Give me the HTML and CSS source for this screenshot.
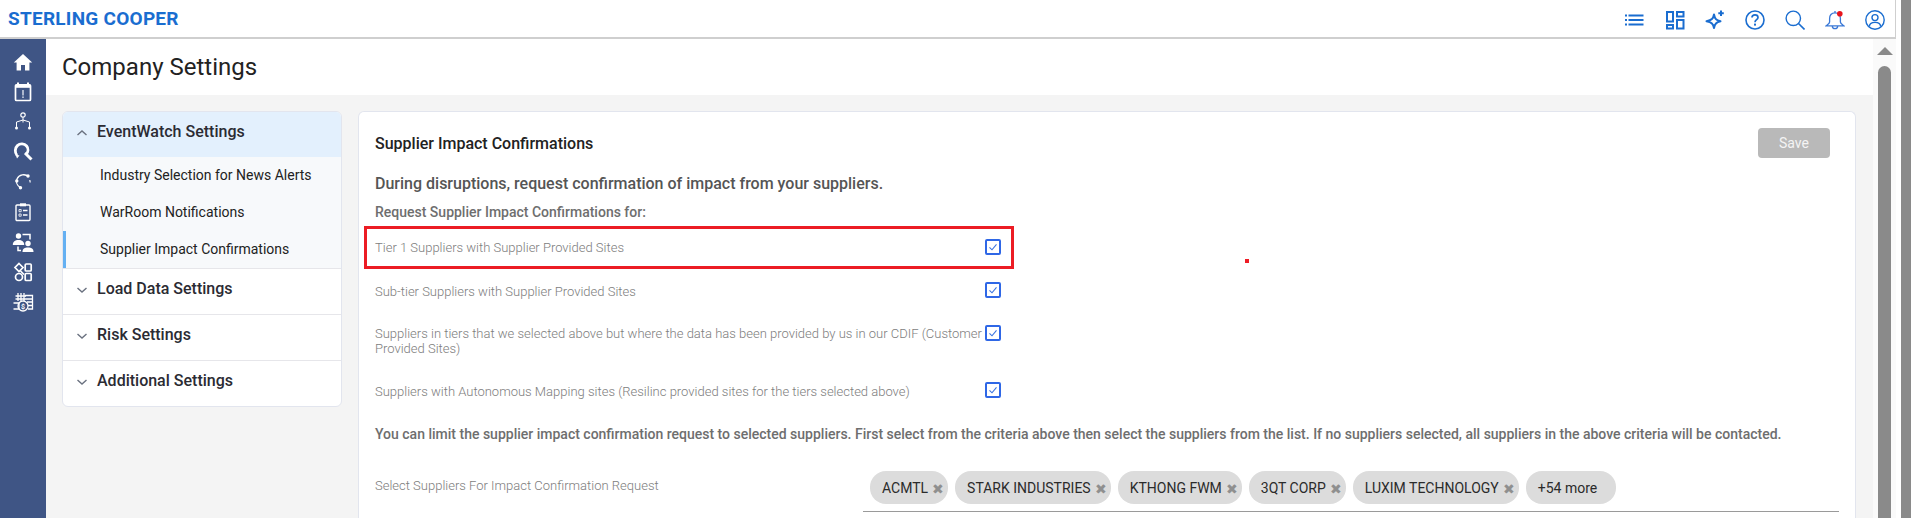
FILE: index.html
```html
<!DOCTYPE html>
<html lang="en">
<head>
<meta charset="utf-8">
<title>Company Settings</title>
<link rel="stylesheet" href="styles.css">
</head>
<body>
<div class="window">
  <div class="app">
    <header class="topbar">
      <div class="logo">STERLING COOPER</div>
      <div class="top-icons">
        <svg class="ti" viewBox="0 0 20 20"><g fill="#1a6dd0"><rect x="0" y="4.5" width="2" height="2"/><rect x="0" y="9" width="2" height="2"/><rect x="0" y="13.5" width="2" height="2"/><rect x="3.500" y="4.500" width="15" height="2"/><rect x="3.500" y="9" width="15" height="2"/><rect x="3.500" y="13.500" width="15" height="2"/></g></svg>
        <svg class="ti" viewBox="0 0 20 20"><g fill="none" stroke="#1a6dd0" stroke-width="2"><rect x="2" y="2" width="6" height="9.500"/><rect x="12" y="2" width="6.500" height="4.500"/><rect x="2" y="15" width="6" height="3.500"/><rect x="12" y="10" width="6.500" height="8.500"/></g></svg>
        <svg class="ti" viewBox="0 0 20 20"><path d="M9 4.500C9.800 8.800 11.200 10.200 15.500 11.300C11.200 12.400 9.800 13.800 9 18C8.200 13.800 6.800 12.400 1.500 11.300C6.800 10.200 8.200 8.800 9 4.500Z" fill="none" stroke="#1a6dd0" stroke-width="2" stroke-linejoin="round"/><path d="M16 0.500V6M13.300 3.200H18.800" stroke="#1a6dd0" stroke-width="2"/></svg>
        <svg class="ti" viewBox="0 0 20 20"><circle cx="10" cy="10" r="9" fill="none" stroke="#1a6dd0" stroke-width="1.600"/><path d="M7 7.600C7 5.800 8.400 4.800 10 4.800C11.700 4.800 13 5.900 13 7.400C13 9.600 10 9.700 10 12.300" fill="none" stroke="#1a6dd0" stroke-width="1.700"/><rect x="9" y="13.600" width="2" height="2" fill="#1a6dd0"/></svg>
        <svg class="ti" viewBox="0 0 20 20"><circle cx="8.300" cy="8.300" r="7.200" fill="none" stroke="#1a6dd0" stroke-width="1.400"/><path d="M13.500 13.500L19.500 19.500" stroke="#1a6dd0" stroke-width="1.600"/></svg>
        <svg class="ti" viewBox="0 0 20 20"><path d="M10 2.800C6.300 2.800 4.600 5.500 4.600 8.500V12C4.600 13.600 3 14.400 1.200 15.800H18.800C17 14.400 15.400 13.600 15.400 12V8.500C15.400 5.500 13.700 2.800 10 2.800ZM10 1V2.800M7.300 16C7.300 19.600 12.700 19.600 12.700 16" fill="none" stroke="#3a78d6" stroke-width="1.300"/><circle cx="14.800" cy="3.800" r="2.800" fill="#e8141c"/></svg>
        <svg class="ti" viewBox="0 0 20 20"><circle cx="10" cy="10" r="9.200" fill="none" stroke="#1a6dd0" stroke-width="1.400"/><circle cx="10" cy="7.600" r="3" fill="none" stroke="#1a6dd0" stroke-width="1.400"/><path d="M4.400 16.600C4.400 13.600 6.500 12.400 10 12.400C13.500 12.400 15.600 13.600 15.600 16.600" fill="none" stroke="#1a6dd0" stroke-width="1.400"/></svg>
      </div>
    </header>
    <div class="body-row">
      <nav class="rail">
        <svg class="ri" viewBox="0 0 22 22"><path d="M11 3L1.800 11.600H4.600V19.500H9V14H13V19.500H17.400V11.600H20.200Z" fill="#fff"/></svg>
        <svg class="ri" viewBox="0 0 22 22"><path d="M6 1.500V5M16 1.500V5" stroke="#fff" stroke-width="2"/><rect x="3.500" y="3.800" width="15" height="15.700" rx="1" fill="none" stroke="#fff" stroke-width="1.700"/><rect x="3.500" y="3.800" width="15" height="3" fill="#fff"/><rect x="10.200" y="9" width="1.600" height="5.500" fill="#c9d0df"/><rect x="10.200" y="15.400" width="1.600" height="1.600" fill="#c9d0df"/></svg>
        <svg class="ri" viewBox="0 0 22 22"><circle cx="11" cy="4" r="2.200" fill="none" stroke="#fff" stroke-width="1.200"/><path d="M11 6.200V9L4.500 11V16M11 9L17.500 11V16M11 9V11.500" fill="none" stroke="#fff" stroke-width="1"/><circle cx="4.500" cy="17" r="1.500" fill="#fff"/><circle cx="17.500" cy="17" r="1.500" fill="#fff"/></svg>
        <svg class="ri" viewBox="0 0 22 22"><path d="M13 12L19.500 18.500" stroke="#fff" stroke-width="3"/><path d="M5 14.200C2.600 11.600 2.800 7 5.400 4.600C8 2.200 12.400 2.400 14.600 5C16.600 7.400 16.400 10.800 14.200 13" fill="none" stroke="#fff" stroke-width="2.800"/><path d="M3.500 13.500L7.500 14.500L5 17.500Z" fill="#fff"/></svg>
        <svg class="ri" viewBox="0 0 22 22"><path d="M16.500 5.500C13 2.500 7 3.500 5 8C3.800 11 5 14.500 8 16.200" fill="none" stroke="#fff" stroke-width="1.300"/><circle cx="16" cy="5" r="1.700" fill="#fff"/><circle cx="4.800" cy="10" r="1.700" fill="#fff"/><circle cx="8.500" cy="16.800" r="1.700" fill="#fff"/><path d="M17.800 9L18.200 11.500" stroke="#fff" stroke-width="1.200"/></svg>
        <svg class="ri" viewBox="0 0 22 22"><rect x="4" y="4" width="14" height="15.500" rx="1" fill="none" stroke="#fff" stroke-width="1.400"/><rect x="8" y="2.300" width="6" height="3" fill="#fff"/><path d="M7 8.500H9.200V10.700H7ZM7 13H9.200V15.200H7Z" fill="none" stroke="#fff" stroke-width=".8"/><path d="M11 9.500H15.500M11 14H15.500" stroke="#fff" stroke-width="1.300"/></svg>
        <svg class="ri" viewBox="0 0 22 22"><circle cx="6.500" cy="5" r="2.700" fill="#fff"/><path d="M.8 14C.8 10.500 3 9 6.500 9C10 9 12.200 10.500 12.200 14Z" fill="#fff"/><circle cx="16" cy="12.500" r="2.700" fill="#fff"/><path d="M10.500 21C10.500 17.500 12.700 16.500 16 16.500C19.300 16.500 21.500 17.500 21.500 21Z" fill="#fff"/><path d="M10.500 3.500H18V8.500M6 15.500V19.500H9" fill="none" stroke="#fff" stroke-width="1.500"/></svg>
        <svg class="ri" viewBox="0 0 22 22"><g fill="none" stroke="#fff" stroke-width="1.700"><path d="M7 2.500L11 6.500L7 10.500L3 6.500Z"/><rect x="13.200" y="3" width="6" height="7" rx="1"/><circle cx="7" cy="16" r="3.500"/><rect x="13.200" y="12.500" width="6" height="7" rx="1"/><path d="M8.500 10L12 13.500"/></g></svg>
        <svg class="ri" viewBox="0 0 22 22"><g fill="none" stroke="#fff" stroke-width="1.300"><path d="M6 10V2M9 10V2M12 10V2M3.500 5H14M3.500 8H14"/><path d="M13 4.500H20.500V18H16"/><path d="M14 8H20.500M15 11H20.500M16 14.500H20.500"/><path d="M1.500 12H7V18H1.500"/><circle cx="11" cy="15" r="5"/></g><text class="money" x="11" y="18">$</text></svg>
      </nav>
      <main class="main">
        <div class="title-bar"><h1 class="page-title">Company Settings</h1></div>
        <div class="content">
          <aside class="menu">
            <div class="menu-head active">
              <svg class="chev" viewBox="0 0 12 8"><path d="M1.500 6L6 2L10.500 6" fill="none" stroke="#6b7280" stroke-width="1.400"/></svg>
              <span>EventWatch Settings</span>
            </div>
            <div class="submenu">
              <div class="sub-item">Industry Selection for News Alerts</div>
              <div class="sub-item">WarRoom Notifications</div>
              <div class="sub-item current">Supplier Impact Confirmations</div>
            </div>
            <div class="menu-head">
              <svg class="chev" viewBox="0 0 12 8"><path d="M1.500 2L6 6L10.500 2" fill="none" stroke="#6b7280" stroke-width="1.400"/></svg>
              <span>Load Data Settings</span>
            </div>
            <div class="menu-head">
              <svg class="chev" viewBox="0 0 12 8"><path d="M1.500 2L6 6L10.500 2" fill="none" stroke="#6b7280" stroke-width="1.400"/></svg>
              <span>Risk Settings</span>
            </div>
            <div class="menu-head">
              <svg class="chev" viewBox="0 0 12 8"><path d="M1.500 2L6 6L10.500 2" fill="none" stroke="#6b7280" stroke-width="1.400"/></svg>
              <span>Additional Settings</span>
            </div>
          </aside>
          <section class="card">
            <div class="card-head">
              <h2 class="card-title">Supplier Impact Confirmations</h2>
              <button class="save" type="button">Save</button>
            </div>
            <p class="lead">During disruptions, request confirmation of impact from your suppliers.</p>
            <p class="sublead">Request Supplier Impact Confirmations for:</p>
            <div class="options">
              <label class="opt flagged"><span class="opt-text">Tier 1 Suppliers with Supplier Provided Sites</span><span class="check"><svg viewBox="0 0 12 12"><path d="M2.500 6.300L5 8.800L9.500 3.300" fill="none" stroke="#3b74e0" stroke-width="1.100"/></svg></span></label>
              <label class="opt"><span class="opt-text">Sub-tier Suppliers with Supplier Provided Sites</span><span class="check"><svg viewBox="0 0 12 12"><path d="M2.500 6.300L5 8.800L9.500 3.300" fill="none" stroke="#3b74e0" stroke-width="1.100"/></svg></span></label>
              <label class="opt tall"><span class="opt-text">Suppliers in tiers that we selected above but where the data has been provided by us in our CDIF (Customer Provided Sites)</span><span class="check"><svg viewBox="0 0 12 12"><path d="M2.500 6.300L5 8.800L9.500 3.300" fill="none" stroke="#3b74e0" stroke-width="1.100"/></svg></span></label>
              <label class="opt"><span class="opt-text">Suppliers with Autonomous Mapping sites (Resilinc provided sites for the tiers selected above)</span><span class="check"><svg viewBox="0 0 12 12"><path d="M2.500 6.300L5 8.800L9.500 3.300" fill="none" stroke="#3b74e0" stroke-width="1.100"/></svg></span></label>
            </div>
            <p class="limit">You can limit the supplier impact confirmation request to selected suppliers. First select from the criteria above then select the suppliers from the list. If no suppliers selected, all suppliers in the above criteria will be contacted.</p>
            <div class="picker">
              <div class="picker-label">Select Suppliers For Impact Confirmation Request</div>
              <div class="chips">
                <span class="chip">ACMTL<i class="x">✖</i></span>
                <span class="chip">STARK INDUSTRIES<i class="x">✖</i></span>
                <span class="chip">KTHONG FWM<i class="x">✖</i></span>
                <span class="chip">3QT CORP<i class="x">✖</i></span>
                <span class="chip">LUXIM TECHNOLOGY<i class="x">✖</i></span>
                <span class="chip more">+54 more</span>
              </div>
            </div>
            <span class="speck"></span>
          </section>
        </div>
      </main>
      <div class="scroll">
        <div class="arrow"></div>
        <div class="thumb"></div>
      </div>
    </div>
  </div>
  <div class="outer-bar"></div>
</div>
</body>
</html>
```
FILE: styles.css
```css
* { box-sizing: border-box; }
html, body { margin: 0; padding: 0; height: 100%; overflow: hidden; background: #fff; }
body { font-family: Roboto, "Liberation Sans", sans-serif; color: #222; }
p, h1, h2 { margin: 0; }

.window { display: flex; width: 1911px; height: 518px; }
.app { width: 1896px; height: 518px; display: flex; flex-direction: column; }
.outer-bar { width: 10px; margin-left: 5px; background: #8a8a8a; }

.topbar { height: 39px; flex: none; display: flex; align-items: center; justify-content: space-between; padding: 0 10px 0 8px; border-bottom: 2px solid #cfcfcf; border-right: 1px solid #cfcfcf; }
.logo { font-size: 19px; font-weight: 700; color: #1a6dd0; letter-spacing: .25px; }
.top-icons { display: flex; gap: 20px; padding-top: 2px; }
.ti { width: 20px; height: 20px; display: block; }

.body-row { flex: 1; display: flex; min-height: 0; }
.rail { width: 46px; flex: none; background: #3f5585; display: flex; flex-direction: column; align-items: center; gap: 8px; padding-top: 12px; }
.ri { width: 22px; height: 22px; display: block; flex: none; }
.money { font: 700 7px Roboto, sans-serif; fill: #fff; text-anchor: middle; }

.main { flex: 1; min-width: 0; display: flex; flex-direction: column; }
.title-bar { height: 56px; flex: none; background: #fff; padding: 12px 0 0 16px; }
.page-title { font-size: 24px; font-weight: 400; line-height: 32px; color: #222; }
.content { flex: 1; min-height: 0; background: #f4f4f4; display: flex; gap: 16px; padding: 16px 17px 0 16px; align-items: flex-start; }

.menu { width: 280px; flex: none; background: #fff; border: 1px solid #e2e5ee; border-radius: 6px; overflow: hidden; }
.menu-head { height: 46px; display: flex; align-items: flex-start; gap: 9px; padding: 10px 0 0 13px; font-size: 16px; font-weight: 500; line-height: 20px; color: #2b2b33; border-top: 1px solid #e6e6ea; }
.menu-head.active { height: 45px; background: #e3f0fd; border-top: 0; }
.chev { width: 12px; height: 8px; margin-top: 7px; flex: none; }
.submenu { background: #f7f9fb; }
.sub-item { height: 37px; padding: 9px 0 0 37px; font-size: 14px; line-height: 18px; color: #222; }
.sub-item.current { box-shadow: inset 3px 0 0 #64b0f2; }

.card { flex: 1; align-self: stretch; position: relative; overflow: hidden; background: #fff; border: 1px solid #e2e5ee; border-bottom: 0; border-radius: 6px 6px 0 0; padding: 16px 13px 0 16px; }
.card-head { display: flex; justify-content: space-between; align-items: flex-start; padding-right: 12px; height: 41px; }
.card-title { font-size: 16px; font-weight: 500; line-height: 20px; color: #222; padding-top: 6px; }
.save { width: 72px; height: 30px; border: 0; border-radius: 4px; background: #b9b9b9; color: #f4f4f4; font: 400 14px Roboto, sans-serif; }
.lead { font-size: 16px; font-weight: 500; line-height: 20px; color: #555; margin-top: 5px; }
.sublead { font-size: 14px; font-weight: 500; line-height: 18px; color: #6e6e6e; margin-top: 9px; }

.options { margin-top: 5px; display: flex; flex-direction: column; width: 650px; margin-left: -11px; }
.opt { display: flex; justify-content: space-between; align-items: center; padding: 0 11px 0 8px; height: 44px; font-size: 13px; font-weight: 300; line-height: 15px; color: #7d7d7d; border: 3px solid transparent; }
.opt.flagged { border-color: #ec1c24; height: 43px; }
.opt.tall { height: 56px; }
.opt.tall .check { align-self: flex-start; margin-top: 9px; margin-bottom: 0; }
.opt-text { width: 611px; }
.check { width: 16px; height: 16px; flex: none; border: 2px solid #2f67e6; border-radius: 2px; background: #fff; display: block; margin-left: -7px; margin-right: -1px; margin-bottom: 2px; }
.check svg { width: 12px; height: 12px; display: block; }

.limit { font-size: 14px; font-weight: 500; line-height: 18px; color: #6e6e6e; margin-top: 12px; white-space: nowrap; }
.picker { display: flex; margin-top: 28px; }
.picker-label { width: 488px; flex: none; padding-top: 6px; font-size: 13px; font-weight: 300; line-height: 18px; color: #7d7d7d; }
.chips { flex: 1; height: 41px; margin-right: 3px; display: flex; gap: 7px; padding: 0 7px 7px 7px; border-bottom: 1px solid #9a9a9a; }
.chip { height: 33px; display: flex; align-items: center; padding: 0 4px 0 12px; border-radius: 16px; background: #dcdcdc; font-size: 14px; color: #2b2b2b; white-space: nowrap; }
.chip.more { padding-right: 19px; }
.x { font-style: normal; font-size: 14px; line-height: 1; color: #8f8f8f; margin-left: 4px; width: 12px; padding-top: 2px; }
.speck { position: absolute; left: 886px; top: 147px; width: 4px; height: 4px; background: #ee1c25; }

.scroll { width: 23px; flex: none; background: #fafafa; display: flex; flex-direction: column; padding: 8px 0 0 4px; }
.arrow { width: 0; height: 0; flex: none; border-left: 8px solid transparent; border-right: 8px solid transparent; border-bottom: 8px solid #8a8a8a; }
.thumb { width: 13px; flex: 1; margin: 11px 0 0 1px; background: #8a8a8a; border-radius: 7px 7px 0 0; }
```
